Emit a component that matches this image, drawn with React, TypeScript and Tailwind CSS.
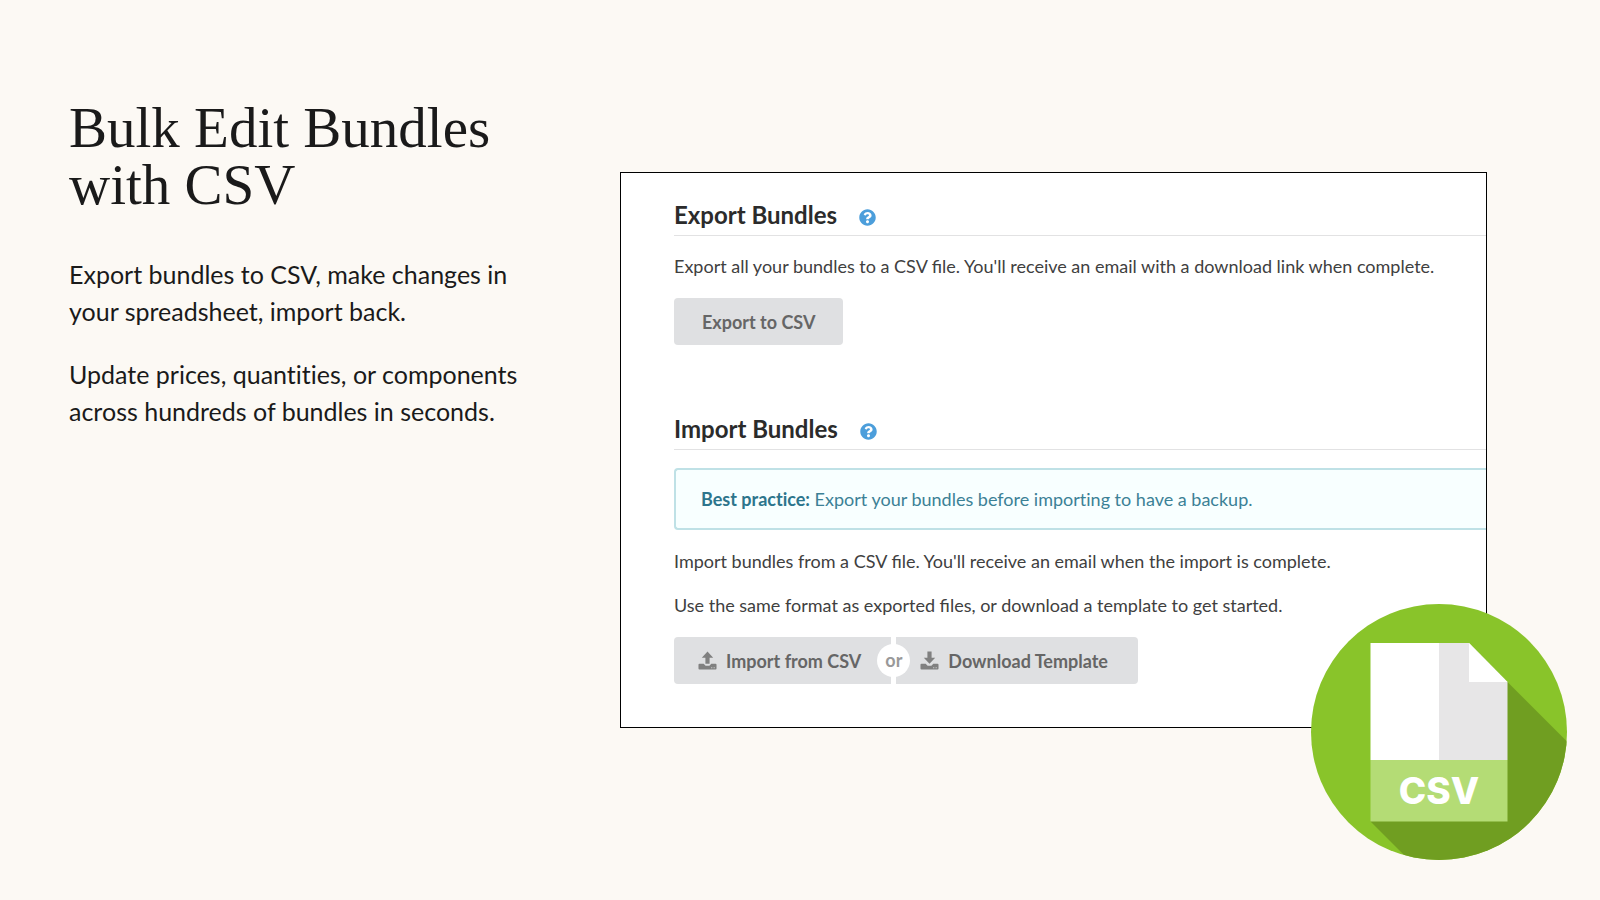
import type { ReactNode } from 'react';
import { FaQuestionCircle } from 'react-icons/fa';

function TrayIcon({ direction }: { direction: 'up' | 'down' }) {
  return (
    <svg viewBox="0 0 20 20" className="w-[19px] h-[19px] fill-[#808080]" aria-hidden="true">
      {direction === 'up' ? (
        <path d="M10 .5L16 7H12.200V13.500H7.800V7H4Z" />
      ) : (
        <path d="M7.800 .5H12.200V7H16L10 13.500L4 7H7.800Z" />
      )}
      <path
        fillRule="evenodd"
        d="M1.500 13.500H6L8 15.500H12L14 13.500H18.500Q19.500 13.500 19.500 14.500V18.500Q19.500 19.500 18.500 19.500H1.500Q.5 19.500 .5 18.500V14.500Q.5 13.500 1.500 13.500ZM14 17.200V18.200H15V17.200ZM16.500 17.200V18.200H17.500V17.200Z"
      />
    </svg>
  );
}

function CsvBadge() {
  return (
    <svg viewBox="0 0 256 256" className="absolute -right-[81px] -bottom-[133px] w-64 h-64" role="img" aria-label="CSV">
      <defs>
        <clipPath id="badge">
          <circle cx="128" cy="128" r="128" />
        </clipPath>
      </defs>
      <g clipPath="url(#badge)">
        <rect width="256" height="256" fill="#89c42a" />
        <path d="M196.500 78L276.500 158V276H118L59.500 217.500Z" fill="#709e21" />
      </g>
      <path d="M59.500 39H128V156H59.500Z" fill="#fff" />
      <path d="M128 39H158L196.500 78V156H128Z" fill="#e7e6e7" />
      <path d="M158 39L196.500 78H158Z" fill="#fff" />
      <rect x="59.500" y="156" width="137" height="61.500" fill="#b4dc75" />
      <text x="128" y="200" textAnchor="middle" fill="#fff" className="font-['Inter',sans-serif] text-[37px] font-extrabold">
        CSV
      </text>
    </svg>
  );
}

function SectionTitle({ children }: { children: ReactNode }) {
  return (
    <div className="flex items-center gap-[22px] pb-1.5 border-b border-[#e2e2e3]">
      <h2 className="text-[24px] leading-7 font-bold text-[#2b2b2b]">{children}</h2>
      <a href="#help" aria-label="Help" className="pt-1">
        <FaQuestionCircle className="w-[17px] h-[17px] text-[#4c9edb]" />
      </a>
    </div>
  );
}

export default function App() {
  return (
    <main className="min-h-screen bg-[#fcf9f4] flex items-start">
      {/* Copy */}
      <section className="w-[620px] shrink-0 pl-[69px] pt-[99px] text-[#1a1a1a]">
        <h1 className="font-['Liberation_Serif',serif] text-[57px] leading-[57px]">
          Bulk Edit Bundles
          <br />
          with CSV
        </h1>
        <div className="mt-[43px] space-y-[26px] font-['Lato',sans-serif] text-[25px] leading-[37px] [font-variant-ligatures:none]">
          <p>
            Export bundles to CSV, make changes in
            <br />
            your spreadsheet, import back.
          </p>
          <p>
            Update prices, quantities, or components
            <br />
            across hundreds of bundles in seconds.
          </p>
        </div>
      </section>

      {/* Import / export panel */}
      <section className="relative flex-1 mt-[172px] mr-[113px] bg-white border border-black pl-[53px] pt-7 pb-[43px] font-['Lato',sans-serif] text-[18px] leading-6 text-[#404040]">
        <SectionTitle>Export Bundles</SectionTitle>
        <p className="mt-[18px]">Export all your bundles to a CSV file. You'll receive an email with a download link when complete.</p>
        <button className="mt-5 h-[47px] px-7 rounded bg-[#dfe0e2] font-bold text-[#666]">Export to CSV</button>

        <div className="mt-[70px]">
          <SectionTitle>Import Bundles</SectionTitle>
        </div>
        <div className="mt-[18px] px-[25px] py-[17px] rounded-l border-2 border-r-0 border-[#bfe1e6] bg-[#f8ffff] text-[#3c8196] [font-variant-ligatures:none]">
          <strong className="text-[#2d758c]">Best practice:</strong> Export your bundles before importing to have a backup.
        </div>
        <p className="mt-[19px]">Import bundles from a CSV file. You'll receive an email when the import is complete.</p>
        <p className="mt-5">Use the same format as exported files, or download a template to get started.</p>
        <div className="mt-5 flex font-bold text-[#666]">
          <button className="h-[47px] pl-6 pr-[30px] rounded-l bg-[#dfe0e2] flex items-center gap-[9px]">
            <TrayIcon direction="up" />
            Import from CSV
          </button>
          <span className="relative w-[5px]">
            <span className="absolute top-[7px] -left-[14px] w-[33px] h-[33px] rounded-full bg-white text-center leading-8 text-[#999]">or</span>
          </span>
          <button className="h-[47px] pl-6 pr-[30px] rounded-r bg-[#dfe0e2] flex items-center gap-[9px]">
            <TrayIcon direction="down" />
            Download Template
          </button>
        </div>
        <CsvBadge />
      </section>
    </main>
  );
}
